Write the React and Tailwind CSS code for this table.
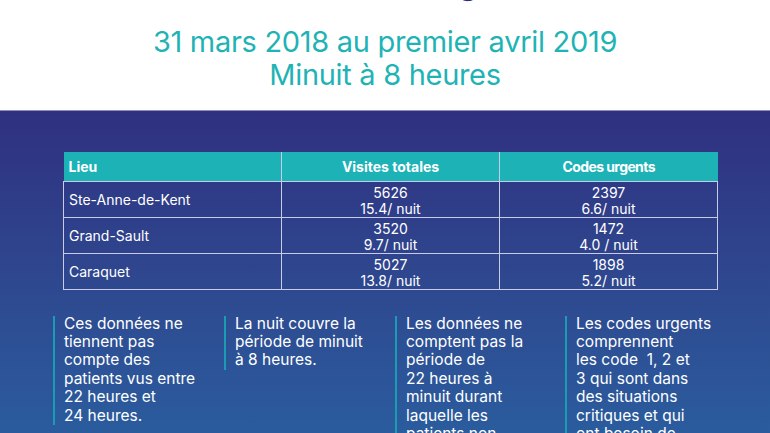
import React from 'react';

const rows = [
  { lieu: 'Ste-Anne-de-Kent', visites: '5626', vNuit: '15.4/ nuit', codes: '2397', cNuit: '6.6/ nuit' },
  { lieu: 'Grand-Sault', visites: '3520', vNuit: '9.7/ nuit', codes: '1472', cNuit: '4.0 / nuit' },
  { lieu: 'Caraquet', visites: '5027', vNuit: '13.8/ nuit', codes: '1898', cNuit: '5.2/ nuit' },
];

// line breaks follow the printed poster
const notes = [
  ['Ces données ne', 'tiennent pas', 'compte des', 'patients vus entre', '22 heures et', '24 heures.'],
  ['La nuit couvre la', 'période de minuit', 'à 8 heures.'],
  ['Les données ne', 'comptent pas la', 'période de', '22 heures à', 'minuit durant', 'laquelle les', 'patients non-', 'urgents sont vus.'],
  ['Les codes urgents', 'comprennent', 'les code\u00a0 1, 2 et', '3 qui sont dans', 'des situations', 'critiques et qui', 'ont besoin de', 'soins immédiats.'],
];

const font = { fontFamily: 'Inter, "Open Sans", sans-serif' };

export default function App() {
  return (
    <div className="w-[770px] h-[433px] overflow-hidden bg-white" style={font}>
      <header className="h-[111px] bg-white border-b border-[#8f8fb8] overflow-hidden text-center">
        <h1 className="-mt-[33px] pl-[14px] text-[30px] leading-[34px] font-bold text-[#2e2a7e]">
          Tableau des 3 urgences
        </h1>
        <div className="mt-[24px] text-[29px] leading-[33px] text-[#1fb3b6] tracking-[-0.3px]">
          <p>31 mars 2018 au premier avril 2019</p>
          <p>Minuit à 8 heures</p>
        </div>
      </header>

      <main className="h-[322px] bg-gradient-to-b from-[#2f3080] to-[#2a5c9d] pt-[41px]">
        <table className="ml-[63px] w-[655px] border-collapse text-[14px] text-white">
          <thead>
            <tr className="bg-[#1cb2b6] h-[29px]">
              <th className="w-[218px] text-left pl-[5px] font-bold border-r border-[#c9cbe8]">Lieu</th>
              <th className="w-[218px] font-bold border-r border-[#c9cbe8]">Visites totales</th>
              <th className="font-bold tracking-[-0.6px]">Codes urgents</th>
            </tr>
          </thead>
          <tbody>
            {rows.map((r) => (
              <tr key={r.lieu} className="h-[36px]">
                <td className="border border-[#c9cbe8] pl-[5px] pt-[2px] align-middle leading-[16px]">{r.lieu}</td>
                <td className="border border-[#c9cbe8] pt-[3px] align-top text-center leading-[16px]">
                  <div>{r.visites}</div>
                  <div>{r.vNuit}</div>
                </td>
                <td className="border border-[#c9cbe8] pt-[3px] align-top text-center leading-[16px]">
                  <div>{r.codes}</div>
                  <div>{r.cNuit}</div>
                </td>
              </tr>
            ))}
          </tbody>
        </table>

        <div className="ml-[53px] mt-[26px] grid grid-cols-[171px_171px_170px_171px] items-start">
          {notes.map((lines, i) => (
            <div key={i} className="border-l-2 border-[#1a9cb2] pl-[9px]">
              <p className="text-[15.5px] leading-[18.4px] text-white -mt-[1px] whitespace-nowrap">
                {lines.map((l, j) => (
                  <span key={j} className="block">{l}</span>
                ))}
              </p>
            </div>
          ))}
        </div>
      </main>
    </div>
  );
}
